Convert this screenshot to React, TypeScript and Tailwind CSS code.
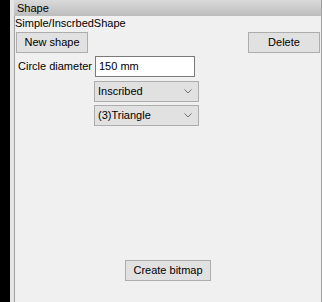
const Chevron = () => (
    <svg width="8" height="5" viewBox="0 0 8 5" className="shrink-0">
        <path d="M0.5 0.5 L4 4 L7.5 0.5" fill="none" stroke="#707070" strokeWidth="1" />
    </svg>
)

const Select = ({ value }: { value: string }) => (
    <div className="h-[21px] w-[105px] bg-[#e1e1e1] border border-[#adadad] flex items-center justify-between pl-[3px] pr-[6px] text-black">
        <span>{value}</span>
        <Chevron />
    </div>
)

const App = () => {
    return (
        <div
            className="w-[322px] h-[302px] flex bg-[#f0f0f0] text-[11px] text-black overflow-hidden"
            style={{ fontFamily: '"Liberation Sans", Arial, sans-serif' }}
        >
            <div className="w-[10px] bg-black" />
            <div className="w-[4px] bg-[#e6e6e6]" />

            <div className="flex-1 flex flex-col border-r border-[#a0a0a0]">
                <div className="h-[16px] bg-gradient-to-b from-[#dadada] to-[#bdbdbd] flex items-center pl-[3px] shrink-0">
                    Shape
                </div>

                <div className="flex-1 flex flex-col border-l border-[#a0a0a0]">
                    <p className="h-[15px] leading-[15px]">Simple/InscrbedShape</p>

                    <div className="flex justify-between px-[1px] mt-[1px]">
                        <button className="h-[21px] w-[72px] bg-[#e1e1e1] border border-[#adadad]">New shape</button>
                        <button className="h-[21px] w-[72px] bg-[#e1e1e1] border border-[#adadad]">Delete</button>
                    </div>

                    <div className="flex items-center mt-[3px] pl-[3px]">
                        <span className="w-[77px]">Circle diameter</span>
                        <div className="h-[21px] w-[100px] bg-white border border-[#7a7a7a] flex items-center pl-[3px]">150 mm</div>
                    </div>

                    <div className="flex flex-col gap-[3px] mt-[4px] pl-[79px]">
                        <Select value="Inscribed" />
                        <Select value="(3)Triangle" />
                    </div>

                    <div className="flex justify-center mt-auto mb-[21px]">
                        <button className="h-[21px] w-[86px] bg-[#e1e1e1] border border-[#adadad]">Create bitmap</button>
                    </div>
                </div>
            </div>
        </div>
    )
}

export default App
